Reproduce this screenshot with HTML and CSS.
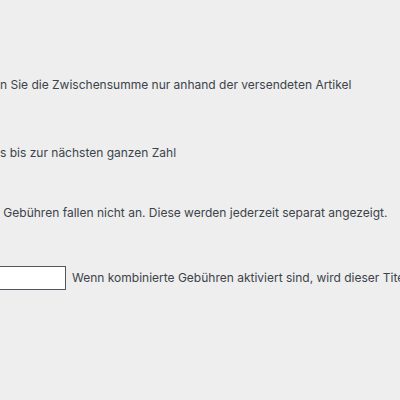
FILE: index.html
```
<!DOCTYPE html>
<html lang="de">
<head>
    <meta charset="UTF-8">
    <meta name="viewport" content="width=device-width, initial-scale=1.0">
    <title>Gebühren-Einstellungen</title>
    <link rel="stylesheet" href="styles.css">
</head>
<body>
    <!-- Einstellungen (links abgeschnitten) -->
    <div class="settings">
        <div class="row row-first">
            <span class="label">n Sie die Zwischensumme nur anhand der versendeten Artikel</span>
        </div>
        <div class="row row-second">
            <span class="label">s bis zur nächsten ganzen Zahl</span>
        </div>
        <div class="row row-third">
            <span class="label cut">e Gebühren fallen nicht an. Diese werden jederzeit separat angezeigt.</span>
        </div>
        <div class="row row-fourth">
            <input type="text" class="title-input">
            <span class="description">Wenn kombinierte Gebühren aktiviert sind, wird dieser Titel verwendet.</span>
        </div>
    </div>
</body>
</html>
```
FILE: styles.css
```
/* Reset */
* {
    margin: 0;
    padding: 0;
    box-sizing: border-box;
}

body {
    font-family: Inter, "Noto Sans", Arial, sans-serif;
    font-size: 12px;
    background-color: #eeeeee;
    color: #3c434a;
    overflow: hidden;
    width: 400px;
    height: 400px;
}

.settings {
    padding-top: 76px;
}

.row {
    display: flex;
    align-items: center;
    white-space: nowrap;
    line-height: 18px;
}

.row-second {
    margin-top: 50px;
}

.row-third {
    margin-top: 42px;
}

.row-fourth {
    margin-top: 44px;
    margin-left: -20px;
    gap: 6px;
}

.cut {
    margin-left: -7px;
}

.title-input {
    width: 86px;
    height: 24px;
    border: 1px solid #50575e;
    background-color: #fff;
    border-radius: 0;
}
```
